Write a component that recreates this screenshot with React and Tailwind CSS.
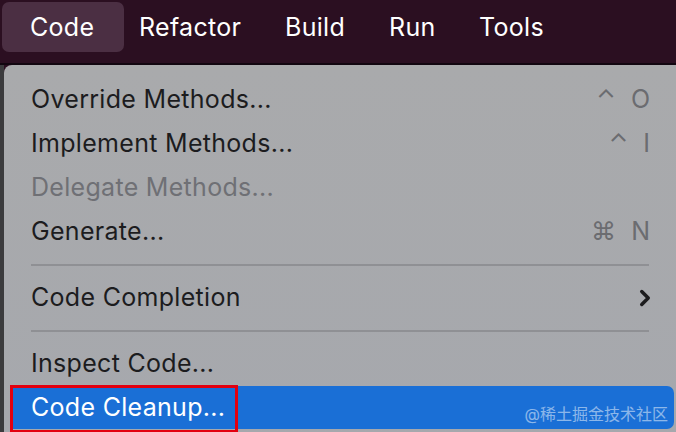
import { ChevronRight } from "lucide-react";

const font = { fontFamily: "Inter, 'Noto Sans CJK SC', sans-serif" };

function Item({ label, shortcut, disabled, submenu }) {
  return (
    <div className="flex h-[44px] items-center justify-between pl-[27px] pr-[22px]">
      <span className={disabled ? "text-[#6f7075]" : "text-[#1c1c1e]"}>{label}</span>
      {shortcut && <span className="text-[#6b6c70] tracking-[4px]">{shortcut}</span>}
      {submenu && <ChevronRight className="-mr-[4px] h-[26px] w-[26px] text-[#1c1c1e]" strokeWidth={3.2} />}
    </div>
  );
}

function Separator() {
  return <div className="mx-[27px] my-[10px] h-[2px] bg-[#8f9094]" />;
}

export default function App() {
  return (
    <div className="flex h-[432px] w-[676px] flex-col overflow-hidden bg-[#2b0f21] text-[25px] tracking-[0.3px]" style={font}>
      <div className="flex h-[63px] items-start pl-[2px] pt-[2px] text-white">
        <div className="flex h-[50px] w-[122px] items-center rounded-[7px] bg-[#4b2f43] pl-[28px] pt-[2px]">Code</div>
        <div className="flex h-[50px] w-[161px] items-center pl-[15px] pt-[2px]">Refactor</div>
        <div className="flex h-[50px] w-[104px] items-center pt-[2px]">Build</div>
        <div className="flex h-[50px] w-[90px] items-center pt-[2px]">Run</div>
        <div className="flex h-[50px] items-center pt-[2px]">Tools</div>
      </div>
      <div className="h-[2px] bg-[#120610]" />
      <div className="flex flex-1">
        <div className="w-[4px] bg-[#3b3b3d]" />
        <div className="relative flex-1 rounded-tl-[8px] bg-gradient-to-b from-[#a9aaac] to-[#a6a8ad] pt-[13px]">
          <Item label="Override Methods..." shortcut="⌃ O" />
          <Item label="Implement Methods..." shortcut="⌃ I" />
          <Item label="Delegate Methods..." disabled />
          <Item label="Generate..." shortcut="⌘ N" />
          <Separator />
          <Item label="Code Completion" submenu />
          <Separator />
          <Item label="Inspect Code..." />
          <div className="relative ml-[8px] mr-[2px] flex h-[43px] items-center rounded-r-[7px] bg-[#1a6fd6] pl-[19px] text-white">
            Code Cleanup...
            <div className="absolute -left-[2px] -top-[1px] h-[48px] w-[228px] border-[3px] border-[#e3000f]" />
            <span className="absolute bottom-[3px] right-[6px] text-[16px] tracking-normal text-white/50">@稀土掘金技术社区</span>
          </div>
        </div>
      </div>
    </div>
  );
}
